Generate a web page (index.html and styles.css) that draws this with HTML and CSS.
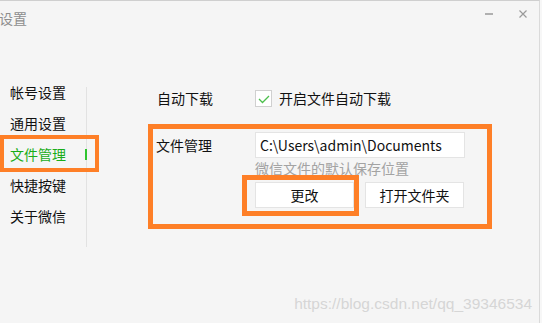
FILE: index.html
```html
<!DOCTYPE html>
<html lang="zh-CN">

<head>
    <meta charset="UTF-8">
    <meta name="viewport" content="width=device-width, initial-scale=1.0">
    <title>设置</title>
    <link rel="stylesheet" href="styles.css">
</head>

<body>
    <div class="window">
        <div class="top-accent"></div>

        <div class="titlebar">
            <span class="title">设置</span>
            <div class="win-controls">
                <div class="win-btn"><span class="min-bar"></span></div>
                <div class="win-btn">
                    <svg width="8" height="8" viewBox="0 0 8 8">
                        <path d="M0.5 0.5 L7.5 7.5 M7.5 0.5 L0.5 7.5" stroke="#9a9a9a" stroke-width="1.2" fill="none"/>
                    </svg>
                </div>
            </div>
        </div>

        <div class="main">
            <ul class="sidebar">
                <li class="nav-item">帐号设置</li>
                <li class="nav-item">通用设置</li>
                <li class="nav-item active">文件管理</li>
                <li class="nav-item">快捷按键</li>
                <li class="nav-item">关于微信</li>
            </ul>

            <div class="content">
                <div class="setting-row">
                    <span class="setting-label">自动下载</span>
                    <span class="checkbox">
                        <svg width="17" height="17" viewBox="0 0 17 17">
                            <polyline points="4,9 7.5,12.5 14,6" stroke="#4cbf4c" stroke-width="1.3" fill="none"/>
                        </svg>
                    </span>
                    <span class="check-text">开启文件自动下载</span>
                </div>

                <div class="highlight-box">
                    <div class="file-row">
                        <span class="setting-label file-label">文件管理</span>
                        <div class="file-fields">
                            <input class="path-input" type="text" value="C:\Users\admin\Documents">
                            <div class="hint">微信文件的默认保存位置</div>
                            <div class="btn-row">
                                <div class="highlight-btn">
                                    <button class="plain-btn">更改</button>
                                </div>
                                <button class="plain-btn">打开文件夹</button>
                            </div>
                        </div>
                    </div>
                </div>
            </div>
        </div>

        <div class="watermark">https://blog.csdn.net/qq_39346534</div>
    </div>
</body>

</html>
```

FILE: styles.css
```css
body {
    margin: 0;
    padding: 0;
    background-color: #f7f7f7;
    font-family: "Noto Sans CJK SC", "Noto Sans", sans-serif;
    overflow: hidden;
}

.window {
    position: relative;
    width: 540px;
    height: 323px;
    box-sizing: border-box;
    background-color: #f5f5f5;
    border-top: 1px solid #cfcfcf;
    border-right: 1px solid #dadada;
    overflow: hidden;
}

.top-accent {
    position: absolute;
    top: -1px;
    left: 5px;
    width: 60px;
    height: 1px;
    background-color: #222;
}

/* title bar */
.titlebar {
    display: flex;
    align-items: center;
    height: 34px;
}

.title {
    font-size: 14px;
    line-height: 16px;
    color: #8e8e8e;
    margin-left: -1px;
}

.win-controls {
    display: flex;
    gap: 14px;
    margin-left: auto;
    margin-right: 6px;
    align-self: flex-start;
    margin-top: 7px;
}

.win-btn {
    width: 20px;
    height: 12px;
    display: flex;
    align-items: center;
    justify-content: center;
}

.min-bar {
    width: 8px;
    height: 2px;
    background-color: #b0b0b0;
}

/* body */
.main {
    display: flex;
}

.sidebar {
    list-style: none;
    margin: 52px 0 0 0;
    padding: 0;
    width: 86px;
    height: 160px;
    border-right: 1px solid #e2e2e2;
}

.nav-item {
    position: relative;
    height: 31px;
    padding-left: 10px;
    font-size: 14px;
    line-height: 10px;
    color: #111;
}

.nav-item.active {
    color: #1aad19;
}

.nav-item.active::after {
    content: "";
    position: absolute;
    right: -1px;
    top: 0;
    width: 2px;
    height: 11px;
    background-color: #2fc52f;
}

.nav-item.active::before {
    content: "";
    position: absolute;
    left: 0;
    top: -14px;
    width: 99px;
    height: 37px;
    box-sizing: border-box;
    border: 4px solid #fe7f27;
}

.content {
    padding: 55px 0 0 61px;
}

.setting-row {
    display: flex;
    align-items: center;
    padding-left: 9px;
    height: 17px;
}

.setting-label {
    width: 98px;
    font-size: 14px;
    line-height: 17px;
    color: #111;
}

.checkbox {
    width: 17px;
    height: 17px;
    box-sizing: border-box;
    border: 1px solid #d0d0d0;
    background-color: #fff;
    display: flex;
    align-items: center;
    justify-content: center;
}

.checkbox svg {
    margin: -1px;
}

.check-text {
    margin-left: 7px;
    font-size: 14px;
    line-height: 17px;
    color: #111;
}

.highlight-box {
    margin-top: 17px;
    width: 344px;
    box-sizing: border-box;
    border: 5px solid #fe7f27;
    padding: 3px 0 8px 3px;
}

.file-row {
    display: flex;
}

.file-label {
    width: 99px;
    margin-top: 5px;
}

.path-input {
    display: block;
    width: 210px;
    height: 26px;
    box-sizing: border-box;
    border: 1px solid #e4e4e4;
    background-color: #fff;
    padding: 0 4px;
    font-family: "Noto Sans CJK SC", sans-serif;
    font-size: 14px;
    color: #111;
    outline: none;
}

.hint {
    height: 17px;
    font-size: 14px;
    line-height: 20px;
    color: #a3a3a3;
}

.btn-row {
    display: flex;
    align-items: flex-start;
    gap: 6px;
    margin-left: -13px;
}

.highlight-btn {
    border: 5px solid #fe7f27;
    padding: 2px 0 3px 8px;
}

.plain-btn {
    display: block;
    width: 99px;
    height: 26px;
    background-color: #fff;
    border: 1px solid #e4e4e4;
    font-family: "Noto Sans CJK SC", sans-serif;
    font-size: 14px;
    color: #111;
    padding: 0;
}

.btn-row > .plain-btn {
    margin-top: 7px;
}

.watermark {
    position: absolute;
    right: 7px;
    bottom: 10px;
    font-family: "Liberation Sans", Arial, sans-serif;
    font-size: 15.5px;
    color: #d6d6d6;
    white-space: nowrap;
}
```
